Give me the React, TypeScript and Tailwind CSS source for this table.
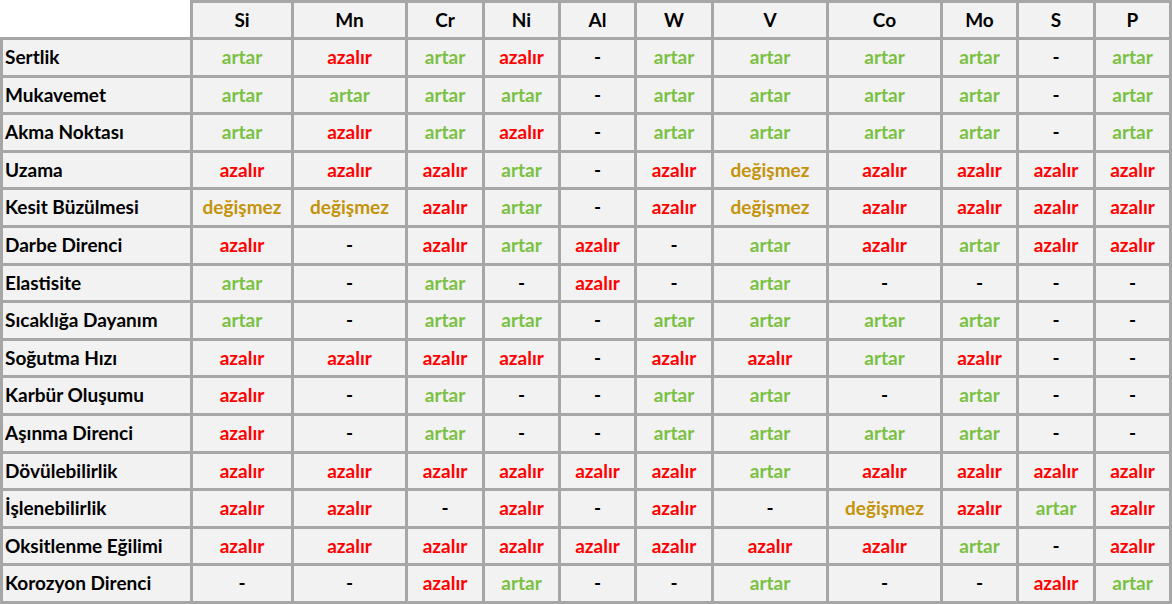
import React from "react";

const elements = ["Si", "Mn", "Cr", "Ni", "Al", "W", "V", "Co", "Mo", "S", "P"];

// each row: property name, then one value per element
const rows: [string, string[]][] = [
  ["Sertlik", ["artar", "azalır", "artar", "azalır", "-", "artar", "artar", "artar", "artar", "-", "artar"]],
  ["Mukavemet", ["artar", "artar", "artar", "artar", "-", "artar", "artar", "artar", "artar", "-", "artar"]],
  ["Akma Noktası", ["artar", "azalır", "artar", "azalır", "-", "artar", "artar", "artar", "artar", "-", "artar"]],
  ["Uzama", ["azalır", "azalır", "azalır", "artar", "-", "azalır", "değişmez", "azalır", "azalır", "azalır", "azalır"]],
  ["Kesit Büzülmesi", ["değişmez", "değişmez", "azalır", "artar", "-", "azalır", "değişmez", "azalır", "azalır", "azalır", "azalır"]],
  ["Darbe Direnci", ["azalır", "-", "azalır", "artar", "azalır", "-", "artar", "azalır", "artar", "azalır", "azalır"]],
  ["Elastisite", ["artar", "-", "artar", "-", "azalır", "-", "artar", "-", "-", "-", "-"]],
  ["Sıcaklığa Dayanım", ["artar", "-", "artar", "artar", "-", "artar", "artar", "artar", "artar", "-", "-"]],
  ["Soğutma Hızı", ["azalır", "azalır", "azalır", "azalır", "-", "azalır", "azalır", "artar", "azalır", "-", "-"]],
  ["Karbür Oluşumu", ["azalır", "-", "artar", "-", "-", "artar", "artar", "-", "artar", "-", "-"]],
  ["Aşınma Direnci", ["azalır", "-", "artar", "-", "-", "artar", "artar", "artar", "artar", "-", "-"]],
  ["Dövülebilirlik", ["azalır", "azalır", "azalır", "azalır", "azalır", "azalır", "artar", "azalır", "azalır", "azalır", "azalır"]],
  ["İşlenebilirlik", ["azalır", "azalır", "-", "azalır", "-", "azalır", "-", "değişmez", "azalır", "artar", "azalır"]],
  ["Oksitlenme Eğilimi", ["azalır", "azalır", "azalır", "azalır", "azalır", "azalır", "azalır", "azalır", "artar", "-", "azalır"]],
  ["Korozyon Direnci", ["-", "-", "azalır", "artar", "-", "-", "artar", "-", "-", "azalır", "artar"]],
];

function valueColor(value: string) {
  if (value === "artar") return "text-[#7ac143]";
  if (value === "azalır") return "text-[#ff0000]";
  if (value === "değişmez") return "text-[#c4930a]";
  return "text-black";
}

const cell = "flex items-center border-r-[3px] border-b-[3px] border-[#a6a6a6] bg-[#f2f2f2]";

export default function App() {
  return (
    <div
      className="grid h-[604px] w-[1172px] grid-cols-[193px_101px_114px_77px_76px_76px_77px_115px_114px_76px_77px_76px] grid-rows-[40px_repeat(15,1fr)] bg-white text-[19px] font-bold text-black"
      style={{ fontFamily: "Lato, 'Open Sans', sans-serif" }}
    >
      <div className="border-r-[3px] border-b-[3px] border-[#a6a6a6] bg-white" />
      {elements.map((el) => (
        <div key={el} className={`${cell} justify-center border-t-[3px]`}>
          {el}
        </div>
      ))}

      {rows.map(([name, values]) => (
        <React.Fragment key={name}>
          <div className={`${cell} border-l-[3px] pl-[2px]`}>{name}</div>
          {values.map((v, i) => (
            <div key={i} className={`${cell} justify-center ${valueColor(v)}`}>
              {v}
            </div>
          ))}
        </React.Fragment>
      ))}
    </div>
  );
}
